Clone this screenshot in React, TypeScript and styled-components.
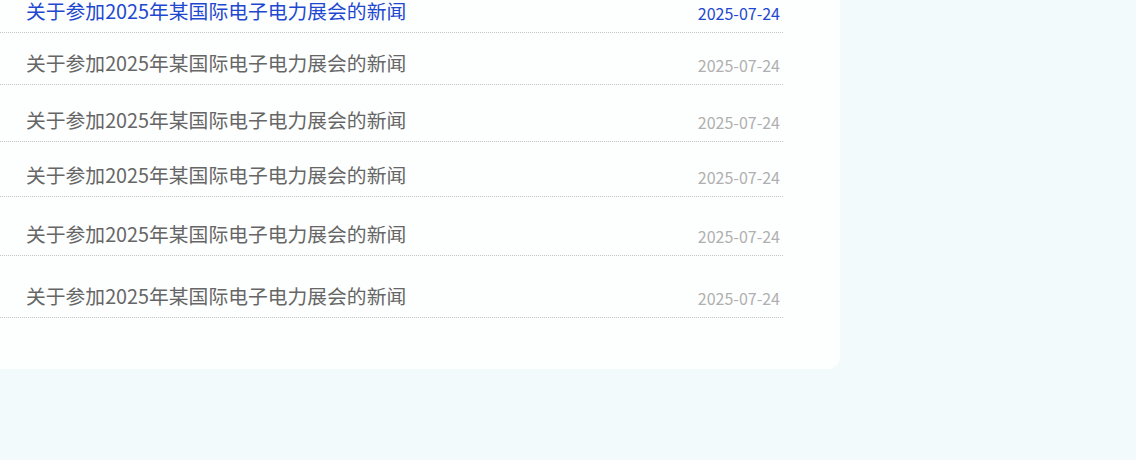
import React from "react";
import styled, { createGlobalStyle } from "styled-components";

const Global = createGlobalStyle`
  html, body { margin: 0; padding: 0; }
  body {
    background: #f2fafb;
    width: 1136px;
    height: 460px;
    overflow: hidden;
    font-family: "Noto Sans CJK SC", "Noto Sans", sans-serif;
  }
`;

const Card = styled.section`
  width: 840px;
  background: #fdfefe;
  border-bottom-right-radius: 12px;
  padding-bottom: 51px;
`;

const List = styled.ul`
  list-style: none;
  margin: 0;
  padding: 0;
  width: 783px;
`;

const Row = styled.li<{ $h: number }>`
  height: ${(p) => p.$h}px;
  box-sizing: border-box;
  display: flex;
  align-items: flex-end;
  padding: 0 3px 7px 26px;
  border-bottom: 1px dotted #c4c4c4;
`;

const Link = styled.a<{ $active?: boolean }>`
  flex: 1;
  display: flex;
  align-items: flex-end;
  justify-content: space-between;
  text-decoration: none;
  color: ${(p) => (p.$active ? "#1f48d0" : "#666666")};
`;

const Title = styled.span`
  font-size: 19.8px;
  line-height: 28px;
`;

const DateText = styled.span<{ $active?: boolean }>`
  font-size: 16px;
  line-height: 24px;
  color: ${(p) => (p.$active ? "#1f48d0" : "#b0b0b0")};
`;

const rows = [33, 52, 57, 55, 59, 62];

export default function App() {
  return (
    <>
      <Global />
      <Card>
        <List>
          {rows.map((h, i) => (
            <Row key={i} $h={h}>
              <Link href="#" $active={i === 0}>
                <Title>关于参加2025年某国际电子电力展会的新闻</Title>
                <DateText $active={i === 0}>2025-07-24</DateText>
              </Link>
            </Row>
          ))}
        </List>
      </Card>
    </>
  );
}
